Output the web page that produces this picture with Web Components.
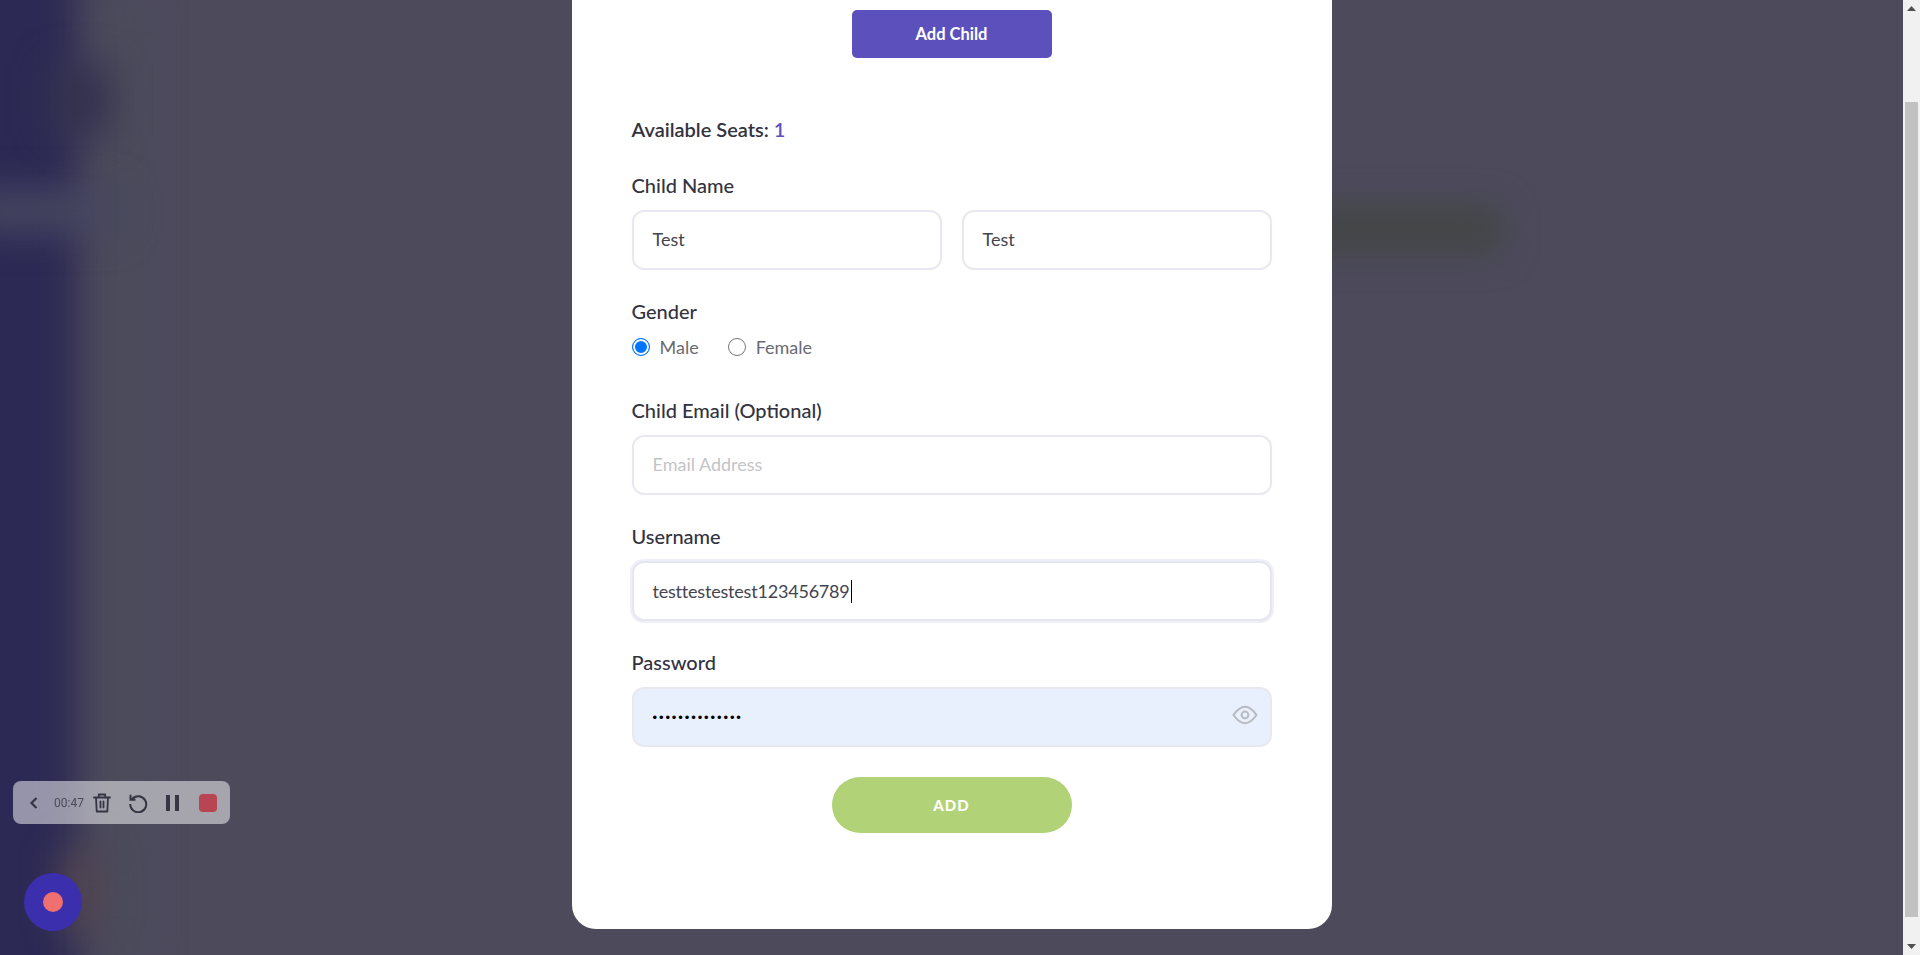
<!DOCTYPE html>
<html>
<head>
<meta charset="utf-8">
<title>Add Child</title>
<style>
  html, body { margin: 0; height: 100%; overflow: hidden; }
  body { font-family: Lato, "Open Sans", sans-serif; }
</style>
</head>
<body>
<app-shell>
  <modal-card>
    <action-button>Add Child</action-button>
    <seat-count count="1"></seat-count>

    <form-field label="Child Name">
      <div style="display:grid;grid-template-columns:1fr 1fr;gap:20px">
        <text-box>Test</text-box>
        <text-box>Test</text-box>
      </div>
    </form-field>

    <form-field label="Gender" tight>
      <div style="display:flex;gap:29px;height:24px;align-items:center;margin-top:-1px">
        <radio-option checked>Male</radio-option>
        <radio-option>Female</radio-option>
      </div>
    </form-field>

    <form-field label="Child Email (Optional)">
      <text-box placeholder>Email Address</text-box>
    </form-field>

    <form-field label="Username">
      <text-box focused>testtestestest123456789</text-box>
    </form-field>

    <form-field label="Password">
      <text-box autofilled password>••••••••••••••</text-box>
    </form-field>

    <submit-button>ADD</submit-button>
  </modal-card>
</app-shell>
<recorder-bar time="00:47"></recorder-bar>
<record-fab></record-fab>

<script>
class AppShell extends HTMLElement {
    constructor() {
        super();
        this.attachShadow({ mode: 'open' });
        this.shadowRoot.innerHTML = `
            <style>
                :host { display: flex; height: 955px; width: 1920px; }
                #page {
                    align-items: center;
                    background: #4d4a5c;
                    display: flex;
                    flex: 1;
                    flex-direction: column;
                    justify-content: flex-end;
                    overflow: hidden;
                    padding-bottom: 26px;
                    position: relative;
                }
                .blur { position: absolute; }
                #strip { background: #2c2954; bottom: -60px; filter: blur(20px); left: -60px; top: -60px; width: 138px; }
                #fade { background: #4a4c5c; bottom: 0; filter: blur(18px); left: 105px; top: 0; width: 40px; }
                #band { background: #474760; filter: blur(18px); height: 42px; left: -30px; top: 190px; width: 150px; }
                #top { background: #34324f; filter: blur(18px); height: 70px; left: 50px; top: 65px; width: 60px; }
                #green { background: #434646; filter: blur(16px); height: 50px; left: 1240px; top: 205px; width: 262px; }
                #red { background: #524650; filter: blur(18px); height: 80px; left: 62px; top: 850px; width: 40px; }
                ::slotted(modal-card) { position: relative; }
            </style>
            <div id="page">
                <div class="blur" id="strip"></div>
                <div class="blur" id="fade"></div>
                <div class="blur" id="band"></div>
                <div class="blur" id="top"></div>
                <div class="blur" id="green"></div>
                <div class="blur" id="red"></div>
                <slot></slot>
            </div>
            <fake-scrollbar></fake-scrollbar>
        `;
    }
}

class FakeScrollbar extends HTMLElement {
    constructor() {
        super();
        this.attachShadow({ mode: 'open' });
        this.shadowRoot.innerHTML = `
            <style>
                :host { background: #f1f1f1; display: flex; flex-direction: column; width: 17px; }
                .arrow { align-items: center; display: flex; flex: none; height: 17px; justify-content: center; }
                #track { flex: 1; padding: 85px 2px 21px 2px; }
                #thumb { background: #c1c1c1; height: 100%; }
            </style>
            <div class="arrow"><svg width="9" height="5" viewBox="0 0 9 5"><path d="M4.5 0 9 5H0z" fill="#505050"/></svg></div>
            <div id="track"><div id="thumb"></div></div>
            <div class="arrow"><svg width="9" height="5" viewBox="0 0 9 5"><path d="M0 0h9L4.5 5z" fill="#505050"/></svg></div>
        `;
    }
}

class ModalCard extends HTMLElement {
    constructor() {
        super();
        this.attachShadow({ mode: 'open' });
        this.shadowRoot.innerHTML = `
            <style>
                :host {
                    background: #fff;
                    border-radius: 24px;
                    box-sizing: border-box;
                    color: #33333f;
                    display: block;
                    flex: none;
                    font-family: Lato, "Open Sans", sans-serif;
                    padding: 40px 60px 96px;
                    width: 760px;
                }
            </style>
            <slot></slot>
        `;
    }
}

class ActionButton extends HTMLElement {
    constructor() {
        super();
        this.attachShadow({ mode: 'open' });
        this.shadowRoot.innerHTML = `
            <style>
                :host {
                    align-items: center;
                    background: #5c51bc;
                    border-radius: 5px;
                    box-sizing: border-box;
                    color: #fff;
                    display: flex;
                    font-size: 16.5px;
                    font-weight: 700;
                    height: 48px;
                    justify-content: center;
                    margin: 0 auto 60px;
                    padding-bottom: 1px;
                    width: 200px;
                }
            </style>
            <slot></slot>
        `;
    }
}

class SeatCount extends HTMLElement {
    constructor() {
        super();
        this.attachShadow({ mode: 'open' });
        this.shadowRoot.innerHTML = `
            <style>
                :host { display: block; font-size: 20px; font-weight: 600; line-height: 24px; margin-bottom: 33px; margin-top: -1px; }
                span { color: #5c51bc; }
            </style>
            Available Seats: <span>${this.getAttribute('count')}</span>
        `;
    }
}

class FormField extends HTMLElement {
    constructor() {
        super();
        this.attachShadow({ mode: 'open' });
        this.shadowRoot.innerHTML = `
            <style>
                :host { display: block; margin-bottom: 30px; }
                :host([tight]) { margin-bottom: 40px; }
                label { display: block; font-size: 20px; font-weight: 500; line-height: 24px; margin-bottom: 13px; margin-top: -1px; }
            </style>
            <label>${this.getAttribute('label')}</label>
            <slot></slot>
        `;
    }
}

class TextBox extends HTMLElement {
    constructor() {
        super();
        this.attachShadow({ mode: 'open' });
        this.shadowRoot.innerHTML = `
            <style>
                :host {
                    align-items: center;
                    background: #fff;
                    border: 2px solid #e8e8f0;
                    border-radius: 12px;
                    box-sizing: border-box;
                    color: #44444f;
                    display: flex;
                    font-size: 18px;
                    height: 60px;
                    padding: 0 19px 2px;
                    position: relative;
                }
                :host([placeholder]) { color: #c4c4c8; }
                :host([focused]) { border-color: #e6e6f2; box-shadow: 0 0 0 2px #efeff8; letter-spacing: -0.2px; padding-bottom: 0; }
                :host([autofilled]) { background: #e8f0fe; padding-bottom: 0; }
                :host([password]) { color: #000; font-family: "Liberation Sans", sans-serif; font-size: 13px; letter-spacing: 1.9px; }
                #caret { background: #000; display: none; height: 23px; margin-left: 1px; width: 1px; }
                :host([focused]) #caret { display: block; }
                svg { display: none; position: absolute; right: 12px; top: 16px; }
                :host([password]) svg { display: block; }
            </style>
            <slot></slot><span id="caret"></span>
            <svg width="26" height="20" viewBox="0 0 26 20" fill="none" stroke="#b9bac0" stroke-width="2">
                <path d="M1.5 10C5 5 8.8 1.8 13 1.8S21 5 24.5 10C21 15 17.2 18.2 13 18.2S5 15 1.5 10Z"/>
                <circle cx="13" cy="10" r="3.4"/>
            </svg>
        `;
    }
}

class RadioOption extends HTMLElement {
    constructor() {
        super();
        this.attachShadow({ mode: 'open' });
        this.shadowRoot.innerHTML = `
            <style>
                :host { align-items: center; color: #6a6a72; display: flex; font-size: 18px; gap: 10px; line-height: 24px; }
                i { border: 1px solid #767676; border-radius: 50%; box-sizing: border-box; display: block; height: 18px; width: 18px; }
                :host([checked]) i { background: #0075ff; border-color: #0075ff; box-shadow: inset 0 0 0 2px #fff; }
            </style>
            <i></i><slot></slot>
        `;
    }
}

class SubmitButton extends HTMLElement {
    constructor() {
        super();
        this.attachShadow({ mode: 'open' });
        this.shadowRoot.innerHTML = `
            <style>
                :host {
                    align-items: center;
                    background: #b1d277;
                    border-radius: 28px;
                    color: #fff;
                    display: flex;
                    font-size: 15px;
                    font-weight: 900;
                    height: 56px;
                    justify-content: center;
                    letter-spacing: 1px;
                    margin: 0 auto;
                    width: 240px;
                }
            </style>
            <slot></slot>
        `;
    }
}

class RecorderBar extends HTMLElement {
    constructor() {
        super();
        this.attachShadow({ mode: 'open' });
        this.shadowRoot.innerHTML = `
            <style>
                :host {
                    align-items: center;
                    background: rgba(255, 255, 255, 0.5);
                    border-radius: 8px;
                    color: #4a4a58;
                    display: flex;
                    font-family: Roboto, sans-serif;
                    font-size: 12px;
                    height: 43px;
                    left: 13px;
                    position: fixed;
                    top: 781px;
                    width: 217px;
                }
                svg { display: block; flex: none; }
                #back { margin-left: 16px; }
                #time { margin-left: 15px; width: 29px; white-space: nowrap; }
                #trash { margin-left: 10px; }
                #undo { margin-left: 17px; }
                #pause { margin-left: 18px; }
                #stop { background: #b74553; border-radius: 4px; height: 18px; margin-left: 20px; width: 18px; }
            </style>
            <svg id="back" width="10" height="12" viewBox="0 0 10 12" fill="none" stroke="#353544" stroke-width="2.2"><path d="M7.5 1 2.5 6l5 5"/></svg>
            <span id="time">${this.getAttribute('time')}</span>
            <svg id="trash" width="18" height="20" viewBox="0 0 18 20" fill="none" stroke="#353544" stroke-width="1.8" stroke-linejoin="round">
                <path d="M1 4.5h16M5.8 4.5V1.5h6.4v3M3 4.5l.7 14h10.6l.7-14M7.5 8.5v6M10.5 8.5v6" stroke-linecap="round"/>
            </svg>
            <svg id="undo" width="20" height="20" viewBox="0 0 20 20" fill="none" stroke="#353544" stroke-width="2">
                <path d="M4 6.2A8 8 0 1 1 2.2 11M2.5 1.8v5h5"/>
            </svg>
            <svg id="pause" width="13" height="16" viewBox="0 0 13 16" fill="#353544"><rect width="4" height="16"/><rect x="9" width="4" height="16"/></svg>
            <div id="stop"></div>
        `;
    }
}

class RecordFab extends HTMLElement {
    constructor() {
        super();
        this.attachShadow({ mode: 'open' });
        this.shadowRoot.innerHTML = `
            <style>
                :host {
                    align-items: center;
                    background: #3b2fae;
                    border-radius: 50%;
                    display: flex;
                    height: 58px;
                    justify-content: center;
                    left: 24px;
                    position: fixed;
                    top: 873px;
                    width: 58px;
                }
                div { background: #f0706f; border-radius: 50%; height: 20px; width: 20px; }
            </style>
            <div></div>
        `;
    }
}

customElements.define('fake-scrollbar', FakeScrollbar);
customElements.define('app-shell', AppShell);
customElements.define('modal-card', ModalCard);
customElements.define('action-button', ActionButton);
customElements.define('seat-count', SeatCount);
customElements.define('form-field', FormField);
customElements.define('text-box', TextBox);
customElements.define('radio-option', RadioOption);
customElements.define('submit-button', SubmitButton);
customElements.define('recorder-bar', RecorderBar);
customElements.define('record-fab', RecordFab);
</script>
</body>
</html>
